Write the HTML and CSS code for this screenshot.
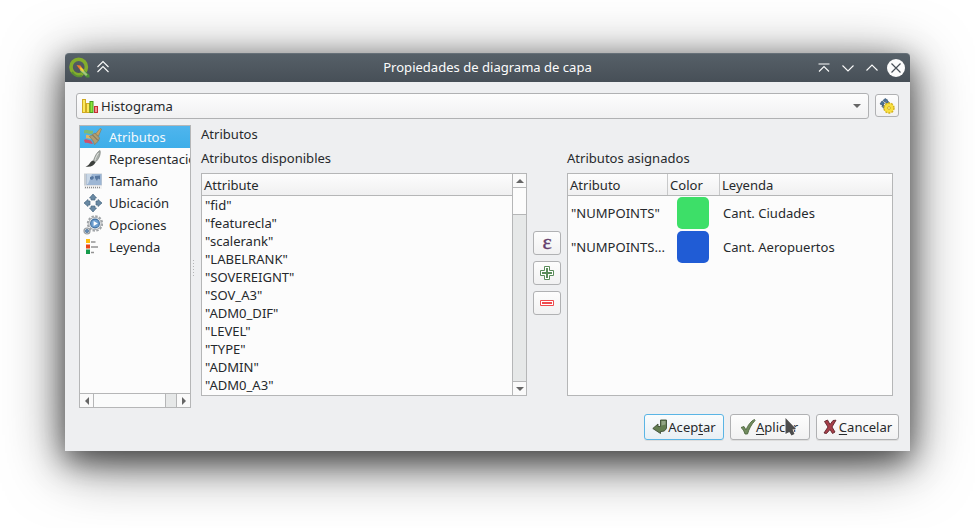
FILE: index.html
```html
<!DOCTYPE html>
<html lang="es">
<head>
<meta charset="utf-8">
<title>Propiedades de diagrama de capa</title>
<link rel="stylesheet" href="styles.css">
</head>
<body>
<main class="window">
  <header class="titlebar">
    <svg class="logo" width="22" height="22" viewBox="0 0 22 22">
      <circle cx="9.7" cy="10" r="7.7" fill="none" stroke="#83ad2c" stroke-width="3.600"/>
      <path d="M3 15a8.800 8.800 0 0 0 10 4" fill="none" stroke="#5a9034" stroke-width="2"/>
      <path d="M12 10.500l8.500 7.500v2.500h-3L11 14z" fill="#4b9236"/>
      <path d="M12.500 11l6 6.500-1.500 1.500-6-5.500z" fill="#a4c480"/>
      <path d="M7.500 8l4 .5 3 4.500-3 .5z" fill="#ee7d2d"/>
      <path d="M11.500 10l3 2.500v3L11 12z" fill="#f2d33b"/>
    </svg>
    <svg class="shade" width="14" height="14" viewBox="0 0 14 14"><path d="M1.500 7L7 1.500l5.500 5.500M1.500 12L7 6.500l5.500 5.500"/></svg>
    <h1>Propiedades de diagrama de capa</h1>
    <div class="controls">
      <svg width="14" height="14" viewBox="0 0 14 14"><path d="M1.500 3h11M2 10.500l5-5 5 5"/></svg>
      <svg width="14" height="14" viewBox="0 0 14 14"><path d="M1.500 4.500L7 10l5.500-5.500"/></svg>
      <svg width="14" height="14" viewBox="0 0 14 14"><path d="M1.500 9.500L7 4l5.500 5.500"/></svg>
      <svg class="close" width="18" height="18" viewBox="0 0 18 18"><circle cx="9" cy="9" r="9"/><path d="M4.500 4.500l9 9M13.500 4.500l-9 9"/></svg>
    </div>
  </header>

  <div class="topbar">
    <div class="combo">
      <svg width="17" height="16" viewBox="0 0 17 16">
        <rect x="1.500" y="1.500" width="3" height="13" fill="#fbe85a" stroke="#d0aa22"/>
        <rect x="5.500" y="5.500" width="3" height="9" fill="#fbe85a" stroke="#d0aa22"/>
        <rect x="9" y="3.500" width="3" height="11" fill="#8be53b" stroke="#469c1c"/>
        <rect x="13.500" y="8.500" width="3" height="6" fill="#f58d91" stroke="#c22f35"/>
      </svg>
      <span>Histograma</span>
      <i class="arrow down"></i>
    </div>
    <button class="tool engine">
      <svg width="16" height="16" viewBox="0 0 16 16">
        <g fill="#4b7399" stroke="#2d4661" stroke-width=".6"><path d="M6 .5l2.500 1.500L6 4 4 2.500zM3 3l2.500 2L4 7.500 1 6zM8.500 2.500l2 2.500-2 1.500L6.500 5zM4 7l2 1-1 2.500-2-2z"/></g>
        <circle cx="10" cy="10" r="4.900" fill="#f8df3e" stroke="#d4b11d" stroke-width="1.600" stroke-dasharray="2 1.080"/>
        <circle cx="10" cy="10" r="4.300" fill="#f8df3e"/>
        <circle cx="10" cy="10" r="1.400" fill="#fff6a8" stroke="#c8a419" stroke-width=".8"/>
      </svg>
    </button>
  </div>

  <div class="body">
    <nav class="sidebar">
      <ul>
        <li class="active">
          <svg width="20" height="20" viewBox="0 0 20 20">
            <path d="M1 3.500c3-2 5 1 9 0v3c-4 1.500-6-1-9 0z" fill="#7cbb78"/><path d="M3 8c2-1 3 1 5 .5v3c-2 1-3-1-5 0z" fill="#e0b465"/><path d="M1 13c2-2 4 0 7 .5l2 3.500c-3 0-5-2-8-1z" fill="#cf506b"/>
            <path d="M6.500 9.500L12 6l4.500 5c-1 3-2.500 5-5 6.500-1-3-2.500-5.500-5-8z" fill="#b09d72" stroke="#837b62" stroke-width=".7"/><path d="M9.500 8l5.500 5.500" stroke="#746a50"/><path d="M12.500 7L17 1.500l1.500.5-3 7z" fill="#c4a269" stroke="#8b7042" stroke-width=".5"/>
          </svg><span>Atributos</span></li>
        <li>
          <svg width="20" height="20" viewBox="0 0 20 20"><path d="M17 1.500c1 4-1.500 9-4.500 11.500l-2-1.500C12 7 14 3 17 1.500z" fill="#abb0ac" stroke="#777c78" stroke-width=".7"/><path d="M15.500 4c-2 3-3 5-3.500 7.500" stroke="#dde0dc" fill="none"/><path d="M10 11.500l2.500 1.700c-1 3.300-5 5.300-10 4.300 4.500-1 4-5 7.500-6z" fill="#3d403d"/></svg><span>Representación</span></li>
        <li>
          <svg width="20" height="20" viewBox="0 0 20 20"><path d="M1 2.500h18V18H1z" fill="#c9ced3"/><path d="M3.500 3h15v11h-15z" fill="#9db6d4"/><path d="M4 3h5l-4 10H4z" fill="#c8d7e7"/><path d="M7 6l3-1 1 2-2 2-2-1zM12 5l5-.5v4l-2-1-1 2.500-2-3z" fill="#5878a0"/><path d="M1 14.500h18V18H1z" fill="#f2f2f2"/><path d="M2 16.500h16" stroke="#8c8c8c" stroke-width="1.500" stroke-dasharray="1 1"/></svg><span>Tamaño</span></li>
        <li>
          <svg width="20" height="20" viewBox="0 0 20 20"><g fill="#6989a3" stroke="#4b6a84" stroke-width=".7" stroke-linejoin="round"><path d="M10 1l3.500 4H12v2H8V5H6.500zM10 19l3.500-4H12v-2H8v2H6.500zM1 10l4-3.500V8h2v4H5v1.500zM19 10l-4-3.500V8h-2v4h2v1.500z"/></g></svg><span>Ubicación</span></li>
        <li>
          <svg width="20" height="20" viewBox="0 0 20 20"><circle cx="12" cy="8.500" r="7.200" fill="none" stroke="#a0a4a7" stroke-width="2" stroke-dasharray="2.400 1.370"/><circle cx="12" cy="8.500" r="6.200" fill="#eceeef" stroke="#a9adb0" stroke-width="1"/><circle cx="12" cy="8.500" r="4.400" fill="#6d9fd0" stroke="#406f9f" stroke-width="1.100"/><path d="M10.600 6l4.200 2.500-4.200 2.500z" fill="#fff"/><circle cx="4" cy="16" r="3" fill="#d5dade" stroke="#989da1" stroke-width="1.200"/><circle cx="4" cy="16" r="1.500" fill="#6d95bd" stroke="#476f96" stroke-width=".8"/></svg><span>Opciones</span></li>
        <li>
          <svg width="20" height="20" viewBox="0 0 20 20"><path d="M3 2h4v4H3z" fill="#ffbd0b"/><path d="M3 7.500h4v4H3z" fill="#ea4519"/><path d="M3 12.500h4V17H3z" fill="#169b4b"/><path d="M8 5h4.500M8 10h7M8 15.500h3" stroke="#929292" stroke-width="1.400"/></svg><span>Leyenda</span></li>
      </ul>
      <div class="hscroll"><b><i class="arrow left"></i></b><em></em><u></u><b><i class="arrow right"></i></b></div>
    </nav>
    <div class="splitter"></div>
    <section class="panel">
      <h2>Atributos</h2>
      <div class="columns">
        <div class="column">
          <h3>Atributos disponibles</h3>
          <div class="list">
            <div class="list-main">
              <div class="head">Attribute</div>
              <ul>
                <li>"fid"</li><li>"featurecla"</li><li>"scalerank"</li><li>"LABELRANK"</li><li>"SOVEREIGNT"</li><li>"SOV_A3"</li><li>"ADM0_DIF"</li><li>"LEVEL"</li><li>"TYPE"</li><li>"ADMIN"</li><li>"ADM0_A3"</li>
              </ul>
            </div>
            <div class="vscroll"><b><i class="arrow up"></i></b><em></em><u></u><b><i class="arrow down"></i></b></div>
          </div>
        </div>
        <div class="actions">
          <button class="tool epsilon">ε</button>
          <button class="tool"><svg width="14" height="14" viewBox="0 0 14 14"><path d="M4.500.5h5v4h4v5h-4v4h-5v-4h-4v-5h4z" fill="#fff" stroke="#5a8c5a"/><path d="M7 2v10M2 7h10" stroke="#5a8c5a" stroke-width="2"/></svg></button>
          <button class="tool"><svg width="14" height="6" viewBox="0 0 14 6"><path d="M.5.5h13v5H.5z" fill="#fff" stroke="#ef4b4e"/><path d="M2 3h10" stroke="#ef4b4e" stroke-width="2"/></svg></button>
        </div>
        <div class="column">
          <h3>Atributos asignados</h3>
          <div class="table">
            <div class="row head"><span>Atributo</span><span>Color</span><span>Leyenda</span></div>
            <div class="row"><span>"NUMPOINTS"</span><span class="swatch green"></span><span>Cant. Ciudades</span></div>
            <div class="row"><span>"NUMPOINTS...</span><span class="swatch blue"></span><span>Cant. Aeropuertos</span></div>
          </div>
        </div>
      </div>
    </section>
  </div>

  <footer class="buttons">
    <button class="btn default"><svg width="16" height="16" viewBox="0 0 16 16"><path d="M8.500 1h6v8c-1 3-3 3.500-6 3.500v2L.8 9.500 6 5v2.500h2.500z" fill="#647e51" stroke="#3c4c33" stroke-width=".9"/><path d="M9.500 2h4v3.500l-4 1z" fill="#93a485"/></svg><span>Acep<u>t</u>ar</span></button>
    <button class="btn apply"><svg width="16" height="16" viewBox="0 0 16 16"><path d="M1 8.500l3-1 2 3.500C8 6 11 2 14.500.5l.5 1C11 6 9 10 7.500 15H5C4 12 3 10 1 8.500z" fill="#718b5e" stroke="#4e663e" stroke-width=".9"/></svg><span><u>A</u>plicar</span>
      <svg class="pointer" width="16" height="24" viewBox="0 0 16 24"><path d="M2.500 2l10.500 11-3.500.5 2 4.500-3 1.500-2.200-3.500-3.800 2z" fill="#4c4c4c" stroke="#fff" stroke-opacity=".7" stroke-width="1.500" paint-order="stroke"/></svg>
    </button>
    <button class="btn cancel"><svg width="14" height="16" viewBox="0 0 14 16"><path d="M1.500 2.500l3-1.500L7 5.500 10 1.500l3-.3L9 8l3 5-2.500 1.500L7 10.500l-3.500 4-2.500-.5L5 8z" fill="#a63f4a" stroke="#5f2229" stroke-width=".9"/></svg><span><u>C</u>ancelar</span></button>
  </footer>
</main>
</body>
</html>
```
FILE: styles.css
```css
* { box-sizing: border-box; }
body {
  margin: 0;
  padding: 53px 65px 77px;
  height: 528px;
  overflow: hidden;
  background: #fff;
  color: #26292c;
  font: 13.05px/18px "Noto Sans", sans-serif;
}
ul { list-style: none; margin: 0; padding: 0; }
h1, h2, h3 { margin: 0; font-size: inherit; font-weight: 400; }
svg { flex: none; display: block; }
button { font: inherit; color: inherit; padding: 0; margin: 0; }

.window {
  display: flex;
  flex-direction: column;
  width: 845px;
  height: 398px;
  background: #eeeff1;
  border-radius: 4px 4px 0 0;
  box-shadow: 0 12px 60px rgba(0, 0, 0, .55), 0 10px 30px rgba(0, 0, 0, .55);
}
.titlebar {
  display: flex;
  align-items: center;
  height: 29px;
  padding: 0 5px 0 4px;
  background: linear-gradient(#566068, #474f57);
  border-top: 1px solid #667078;
  border-radius: 4px 4px 0 0;
  color: #fcfcfc;
}
.titlebar svg { fill: none; stroke: #fcfcfc; stroke-width: 1.1; }
.titlebar .logo { stroke: none; }
.titlebar .shade { margin: 0 0 2px 5px; }
.titlebar h1 { flex: 1; text-align: center; padding: 0 0 2px 48px; }
.controls { display: flex; align-items: center; gap: 10px; padding-bottom: 1px; }
.controls .close { margin-left: -2px; }
.controls .close circle { fill: #fcfcfc; stroke: none; }
.controls .close path { stroke: #474f57; stroke-width: 1.2; }

.topbar {
  display: flex;
  align-items: center;
  gap: 6px;
  padding: 11px 11px 0;
  height: 37px;
}
.combo, .tool, .btn {
  display: flex;
  align-items: center;
  border: 1px solid #b0b1b3;
  border-radius: 3px;
  background: linear-gradient(#fdfdfd, #f1f1f2);
}
.combo { flex: 1; height: 26px; padding: 0 7px 0 4px; }
.combo span { flex: 1; margin-left: 3px; }
.tool { justify-content: center; width: 28px; height: 24px; }
.engine { width: 24px; height: 23px; margin-bottom: 1px; }

.arrow { width: 0; height: 0; border: 4px solid transparent; }
.down { border-top-color: #666; border-bottom: 0; }
.up { border-bottom-color: #666; border-top: 0; }
.left { border-right-color: #666; border-left: 0; }
.right { border-left-color: #666; border-right: 0; }

.body { display: flex; height: 289px; padding: 6px 17px 0 14px; }
.sidebar {
  display: flex;
  flex-direction: column;
  width: 112px;
  height: 283px;
  border: 1px solid #b5b6b7;
  background: #fcfcfc;
}
.sidebar ul { flex: 1; overflow: hidden; }
.sidebar li {
  display: flex;
  align-items: center;
  height: 22px;
  padding-left: 3px;
  gap: 6px;
  white-space: nowrap;
}
.sidebar .active { background: linear-gradient(#4fb5ed, #3daee9); color: #f4f9fc; }
.hscroll { display: flex; height: 14px; border-top: 1px solid #b5b6b7; background: #e6e8e8; }
.hscroll b { display: flex; align-items: center; justify-content: center; width: 13px; background: #fafafa; }
.hscroll em { width: 73px; border: solid #b5b6b7; border-width: 0 1px; background: #fafbfb; }
.hscroll u { flex: 1; border-right: 1px solid #b5b6b7; }
.splitter { width: 1px; height: 16px; margin: 135px 7px 0 2px; background: repeating-linear-gradient(#b4b5b7 0 1px, transparent 1px 3px); }

.panel { display: flex; flex-direction: column; width: 692px; }
.columns { display: flex; margin-top: 6px; }
.column { width: 326px; }
.list, .table { height: 223px; margin-top: 6px; border: 1px solid #b5b6b7; background: #fcfcfc; }
.list { display: flex; }
.list-main { flex: 1; }
.list li { height: 18px; padding-left: 3px; }
.head { height: 22px; border-bottom: 1px solid #b5b6b7; background: linear-gradient(#fdfdfd, #f0f0f1); line-height: 22px; padding-left: 2px; }
.vscroll { display: flex; flex-direction: column; width: 14px; border-left: 1px solid #b5b6b7; background: #e6e8e8; }
.vscroll b { display: flex; align-items: center; justify-content: center; height: 13px; background: #fafafa; }
.vscroll em { height: 28px; border: solid #b5b6b7; border-width: 1px 0; background: #fcfcfc; }
.vscroll u { flex: 1; border-bottom: 1px solid #b5b6b7; }

.actions { display: flex; flex-direction: column; gap: 6px; width: 40px; padding: 82px 6px 0; }
.epsilon { color: #633d6b; font: 22px/20px "Liberation Serif", serif; padding-bottom: 3px; -webkit-text-stroke: .4px #633d6b; }

.row { display: grid; grid-template-columns: 100px 52px 1fr; align-items: center; height: 34px; }
.row > span { padding-left: 3px; }
.row.head { height: 22px; padding: 0; }
.row.head span { height: 21px; padding-left: 2px; border-right: 1px solid #c8c9ca; }
.row.head span:last-child { border: 0; }
.row .swatch { width: 32px; height: 32px; margin-left: 9px; border-radius: 5px; }
.green { background: #3ddf68; }
.blue { background: #205cd5; }

.buttons { display: flex; justify-content: flex-end; gap: 6px; padding: 6px 11px 0; }
.btn { position: relative; justify-content: center; width: 80px; height: 26px; box-shadow: 0 1px 0 #ddd; }
.btn u { text-decoration-thickness: 1px; text-underline-offset: 2px; }
.default { border-color: #5ab5e5; background: linear-gradient(#fafcfd, #e8eff4); }
.apply { padding-right: 2px; }
.cancel { width: 83px; gap: 2px; }
.pointer { position: absolute; left: 52px; top: 1px; }
```
